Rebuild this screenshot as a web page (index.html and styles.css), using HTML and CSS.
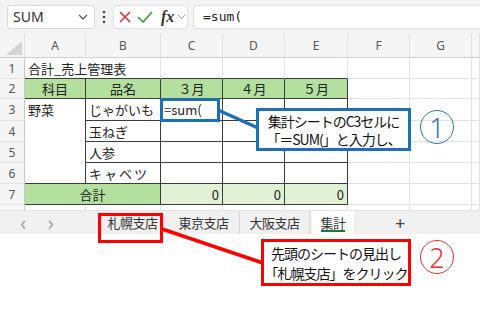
FILE: index.html
```html
<!DOCTYPE html>
<html lang="ja">
<head>
  <meta charset="UTF-8" />
  <title>集計シート</title>
  <link rel="stylesheet" href="styles.css">
</head>
<body>
  <div class="formula-bar">
    <div class="name-box">
      <span>SUM</span>
      <svg width="10" height="6" viewBox="0 0 10 6"><path d="M1 1 L5 5 L9 1" fill="none" stroke="#555" stroke-width="1.2"/></svg>
    </div>
    <div class="dots">
      <svg width="4" height="14" viewBox="0 0 4 14"><circle cx="2" cy="2" r="1.3" fill="#444"/><circle cx="2" cy="7" r="1.3" fill="#444"/><circle cx="2" cy="12" r="1.3" fill="#444"/></svg>
    </div>
    <div class="fx-box">
      <svg class="ic-cancel" width="14" height="14" viewBox="0 0 14 14"><path d="M2 2 L12 12 M12 2 L2 12" stroke="#d13438" stroke-width="1.6"/></svg>
      <svg class="ic-ok" width="16" height="14" viewBox="0 0 16 14"><path d="M1 7 L6 12 L15 2" fill="none" stroke="#3a9a3a" stroke-width="1.6"/></svg>
      <span class="fx">fx</span>
      <svg class="ic-more" width="9" height="6" viewBox="0 0 9 6"><path d="M1 1 L4.5 4.5 L8 1" fill="none" stroke="#999" stroke-width="1"/></svg>
    </div>
    <div class="formula-input">=sum(</div>
  </div>

  <div class="sheet">
    <div class="corner"><svg width="24" height="24" viewBox="0 0 24 24"><polygon points="6,22 22,22 22,8" fill="#d4d4d4"/></svg></div>
    <div class="col-head">A</div>
    <div class="col-head">B</div>
    <div class="col-head">C</div>
    <div class="col-head">D</div>
    <div class="col-head">E</div>
    <div class="col-head">F</div>
    <div class="col-head">G</div>
    <div class="col-head"></div>

    <div class="row-head">1</div>
    <div class="cell span2 top-edge">合計_売上管理表</div>
    <div class="cell top-edge"></div>
    <div class="cell top-edge"></div>
    <div class="cell top-edge"></div>
    <div class="cell"></div>
    <div class="cell"></div>
    <div class="cell"></div>

    <div class="row-head">2</div>
    <div class="cell t head">科目</div>
    <div class="cell t head">品名</div>
    <div class="cell t head">３月</div>
    <div class="cell t head">４月</div>
    <div class="cell t head">５月</div>
    <div class="cell"></div>
    <div class="cell"></div>
    <div class="cell"></div>

    <div class="row-head">3</div>
    <div class="cell t tall">野菜</div>
    <div class="cell t">じゃがいも</div>
    <div class="cell t">=sum(</div>
    <div class="cell t"></div>
    <div class="cell t"></div>
    <div class="cell"></div>
    <div class="cell"></div>
    <div class="cell"></div>

    <div class="row-head">4</div>
    <div class="cell t">玉ねぎ</div>
    <div class="cell t"></div>
    <div class="cell t"></div>
    <div class="cell t"></div>
    <div class="cell"></div>
    <div class="cell"></div>
    <div class="cell"></div>

    <div class="row-head">5</div>
    <div class="cell t">人参</div>
    <div class="cell t"></div>
    <div class="cell t"></div>
    <div class="cell t"></div>
    <div class="cell"></div>
    <div class="cell"></div>
    <div class="cell"></div>

    <div class="row-head">6</div>
    <div class="cell t wide">キャベツ</div>
    <div class="cell t"></div>
    <div class="cell t"></div>
    <div class="cell t"></div>
    <div class="cell"></div>
    <div class="cell"></div>
    <div class="cell"></div>

    <div class="row-head">7</div>
    <div class="cell t head span2">合計</div>
    <div class="cell t total">0</div>
    <div class="cell t total">0</div>
    <div class="cell t total">0</div>
    <div class="cell"></div>
    <div class="cell"></div>
    <div class="cell"></div>

    <div class="row-head"></div>
    <div class="cell"></div>
    <div class="cell"></div>
    <div class="cell"></div>
    <div class="cell"></div>
    <div class="cell"></div>
    <div class="cell"></div>
    <div class="cell"></div>
    <div class="cell"></div>
  </div>

  <div class="tabbar">
    <div class="tab-nav">
      <span>&lsaquo;</span>
      <span>&rsaquo;</span>
    </div>
    <div class="tab">札幌支店</div>
    <div class="tab">東京支店</div>
    <div class="tab sep">大阪支店</div>
    <div class="tab active">集計</div>
    <div class="tab-add">+</div>
  </div>

  <svg class="leaders" width="480" height="312" viewBox="0 0 480 312">
    <line x1="218" y1="110" x2="258" y2="128" stroke="#1f6fb4" stroke-width="3.5"/>
    <line x1="162" y1="229" x2="263" y2="263" stroke="#ff0000" stroke-width="3.5"/>
  </svg>

  <div class="sel-box"></div>
  <div class="callout blue">集計シートのC3セルに<br>「＝SUM(」と入力し、</div>
  <div class="badge blue">1</div>

  <div class="tab-mark"></div>
  <div class="callout red">先頭のシートの見出し<br>「札幌支店」をクリック</div>
  <div class="badge red">2</div>
</body>
</html>
```

FILE: styles.css
```css
* { box-sizing: border-box; }
body { margin: 0; width: 480px; height: 312px; overflow: hidden; position: relative; background: #fff; font-family: "Noto Sans CJK JP", sans-serif; color: #222; }

.formula-bar { height: 33px; background: #f3f3f3; display: flex; align-items: center; padding-left: 7px; }
.name-box { width: 88px; height: 24px; background: #fff; border: 1px solid #d9d9d9; border-radius: 3px; display: flex; align-items: center; justify-content: space-between; padding: 0 6px 0 5px; font-family: "Noto Sans", sans-serif; font-size: 14px; color: #333; }
.dots { width: 18px; display: flex; justify-content: center; }
.fx-box { width: 75px; height: 24px; background: #fff; border: 1px solid #e2e2e2; border-radius: 3px; display: flex; align-items: center; padding-left: 4px; }
.ic-ok { margin-left: 5px; }
.fx { margin-left: 8px; font-family: "Liberation Serif", serif; font-style: italic; font-weight: bold; font-size: 16px; color: #333; }
.ic-more { margin-left: 3px; }
.formula-input { flex: 1; height: 24px; margin-left: 5px; background: #fff; border: 1px solid #e2e2e2; border-right: none; border-radius: 3px 0 0 3px; padding-left: 9px; font-family: "DejaVu Sans Mono", monospace; font-size: 13px; line-height: 22px; color: #222; }

.sheet { display: grid; grid-template-columns: 25px 61px 75px 62px 62px 63px 62px 62px 8px; grid-template-rows: 25px 21px 20px 22px 21px 21px 21px 21px 6px; }
.corner { background: #f5f5f5; border-right: 1px solid #e0e0e0; border-bottom: 1px solid #d0d0d0; }
.col-head { background: #f5f5f5; border-right: 1px solid #e0e0e0; border-bottom: 1px solid #d0d0d0; font-family: "Noto Sans", sans-serif; font-size: 12px; color: #555; display: flex; align-items: center; justify-content: center; }
.row-head { background: #f5f5f5; border-right: 1px solid #c8c8c8; border-bottom: 1px solid #e3e3e3; font-family: "Noto Sans", sans-serif; font-size: 12px; color: #555; display: flex; align-items: center; justify-content: center; }
.cell { border-right: 1px solid #e3e3e3; border-bottom: 1px solid #e3e3e3; font-size: 13px; line-height: 19px; padding: 0 3px; white-space: nowrap; display: flex; align-items: center; }
.span2 { grid-column: span 2; }
.top-edge { border-bottom-color: #3c3c3c; }
.t { border-right-color: #3c3c3c; border-bottom-color: #3c3c3c; }
.head { background: #b3df9f; justify-content: center; }
.tall { grid-row: span 4; align-items: flex-start; padding-top: 1px; }
.wide { letter-spacing: 2px; }
.total { background: #e1f1d6; justify-content: flex-end; }

.tabbar { height: 23px; background: #f0f0f0; display: flex; align-items: stretch; font-size: 13px; letter-spacing: -0.5px; color: #333; }
.tab-nav { width: 97px; display: flex; align-items: center; gap: 22px; padding-left: 20px; font-family: "Noto Sans", sans-serif; font-size: 20px; color: #a0a0a0; }
.tab { width: 71px; display: flex; align-items: center; justify-content: center; }
.sep { border-left: 1px solid #d6d6d6; border-right: 1px solid #d6d6d6; }
.active { width: 42px; margin-left: 2px; background: #fff; position: relative; }
.active::after { content: ""; position: absolute; left: 9px; right: 9px; bottom: 2px; height: 2px; background: #107c41; }
.tab-add { width: 92px; display: flex; align-items: center; justify-content: center; font-family: "Noto Sans", sans-serif; font-size: 18px; color: #444; }

.leaders { position: absolute; left: 0; top: 0; }
.sel-box { position: absolute; left: 160px; top: 98px; width: 60px; height: 24px; border: 3px solid #1f6fb4; }
.callout { position: absolute; background: #fff; text-align: center; font-size: 14px; letter-spacing: -1px; color: #111; }
.callout.blue { left: 256px; top: 108px; width: 155px; height: 43px; border: 3px solid #1f6fb4; line-height: 18px; padding-top: 1px; }
.callout.red { left: 261px; top: 239px; width: 150px; height: 47px; border: 3px solid #ff0000; line-height: 20px; padding-top: 1px; }
.tab-mark { position: absolute; left: 98px; top: 213px; width: 65px; height: 30px; border: 3px solid #ff0000; }
.badge { position: absolute; width: 34px; height: 34px; border-radius: 50%; border: 1.5px solid; display: flex; align-items: center; justify-content: center; font-family: "Noto Sans", sans-serif; font-weight: 300; font-size: 27px; }
.badge.blue { left: 420px; top: 110px; color: #2e75b6; border-color: #2e75b6; }
.badge.red { left: 420px; top: 240px; color: #e83030; border-color: #e83030; }
```
